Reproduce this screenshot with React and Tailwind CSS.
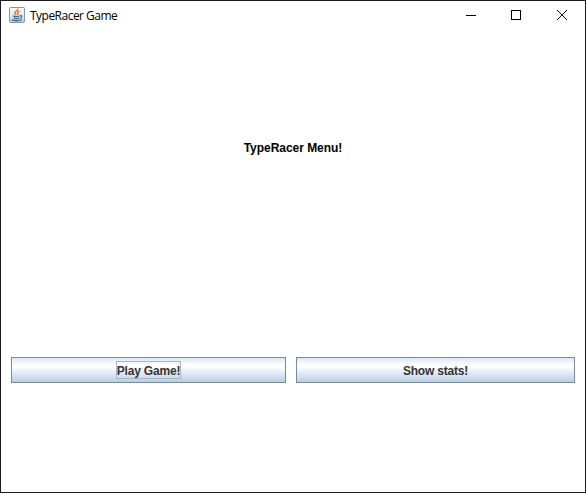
import React from "react";

function JavaIcon() {
  return (
    <svg width="16" height="16" viewBox="0 0 16 16" className="mb-[2px] shrink-0">
      <defs>
        <linearGradient id="tile" x1="0" y1="0" x2="0" y2="1">
          <stop offset="0" stopColor="#f4f7f9" />
          <stop offset="0.6" stopColor="#e3eaf0" />
          <stop offset="1" stopColor="#b4c5d3" />
        </linearGradient>
      </defs>
      <rect x="0.5" y="0.5" width="15" height="15" rx="1" fill="url(#tile)" stroke="#8297a9" />
      <path d="M9 1.8C9.5 3.6 5.4 4.4 5.8 6.1C6 7 7.2 7.4 7.3 8.2M10.8 4.1C9 4.8 8.1 5.6 8.9 6.6C9.3 7.2 9 7.7 8.5 8.2" fill="none" stroke="#e67a1c" strokeWidth="1.5" />
      <path d="M4 8.9C5.8 9.8 9 9.7 10.6 9M11 8.8C13.8 8.2 13.3 10.6 11 11.1M4.8 11C6.5 11.8 8.9 11.7 10.3 11M2.8 12.8C4.6 13.9 10.8 13.9 12.9 12.6" fill="none" stroke="#3f6787" strokeWidth="1.2" />
    </svg>
  );
}

function MetalButton({ width, focused, children }) {
  return (
    <button
      className={`${width} flex h-[26px] items-center justify-center border border-[#7a8a99] bg-[linear-gradient(to_bottom,#dde8f3_0%,#ffffff_30%,#ffffff_36%,#b8cfe5_100%)] text-[12px] leading-[16px] font-bold tracking-[-0.2px] text-[#333333]`}
    >
      <span className={`flex h-[18px] items-center whitespace-nowrap border pt-[2px] ${focused ? "border-[#a3b8cc]" : "border-transparent"}`}>
        {children}
      </span>
    </button>
  );
}

export default function App() {
  return (
    <div className="flex h-[493px] w-[586px] flex-col border border-[#1b1b1f] bg-white font-['Liberation_Sans',Arial,sans-serif]">
      <header className="flex h-[30px] shrink-0 items-center justify-between pl-2">
        <div className="flex items-center gap-[5px]">
          <JavaIcon />
          <span className="whitespace-nowrap font-['Open_Sans','Noto_Sans',sans-serif] text-[12px] leading-4 tracking-[-0.52px] text-black">
            TypeRacer Game
          </span>
        </div>
        <div className="flex">
          <svg width="46" height="30" viewBox="0 0 46 30" stroke="#000" shapeRendering="crispEdges">
            <path d="M18 14.5H28" />
          </svg>
          <svg width="45" height="30" viewBox="0 0 45 30" fill="none" stroke="#000" shapeRendering="crispEdges">
            <rect x="17.5" y="9.5" width="9" height="9" />
          </svg>
          <svg width="46" height="30" viewBox="0 0 46 30" fill="none" stroke="#000">
            <path d="M18 9L28 19M28 9L18 19" />
          </svg>
        </div>
      </header>
      <main className="flex grow flex-col px-[10px]">
        <h1 className="mt-[109px] text-center text-[12px] leading-4 font-bold tracking-[-0.04px] text-black">TypeRacer Menu!</h1>
        <div className="mt-[201px] flex gap-[10px]">
          <MetalButton width="w-[275px]" focused>Play Game!</MetalButton>
          <MetalButton width="w-[279px]">Show stats!</MetalButton>
        </div>
      </main>
    </div>
  );
}
